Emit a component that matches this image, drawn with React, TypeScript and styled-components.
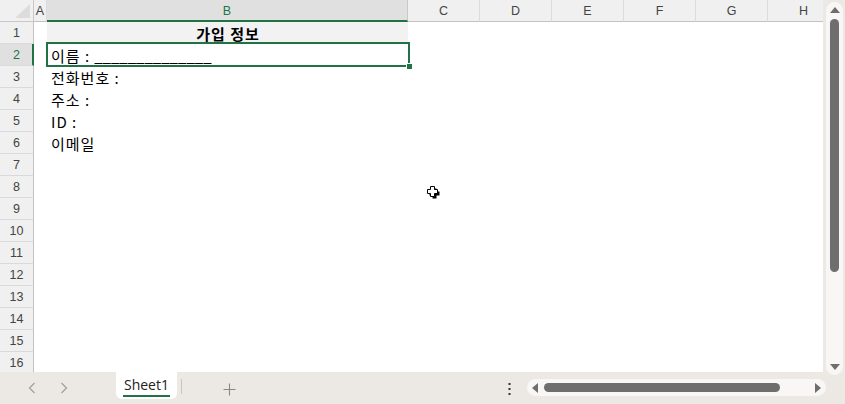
import styled, { createGlobalStyle } from 'styled-components'

const GREEN = '#217346'
const UI_FONT = `'Liberation Sans', 'Noto Sans', Arial, sans-serif`
const CELL_FONT = `'Noto Sans CJK KR', 'Noto Sans', sans-serif`

const GlobalStyle = createGlobalStyle`
  html, body {
    margin: 0;
    padding: 0;
    overflow: hidden;
    background: #ece9e5;
  }
`

const Window = styled.div`
  width: 845px;
  height: 404px;
  display: flex;
  flex-direction: column;
  background: #ece9e5;
  overflow: hidden;
  position: relative;
`

const Main = styled.div`
  display: flex;
  height: 372px;
`

const Sheet = styled.div`
  position: relative;
  width: 823px;
  height: 372px;
  overflow: hidden;
  background: #fff;
  display: grid;
  grid-template-columns: 34px 13px 361px repeat(6, 72px);
  grid-template-rows: repeat(17, 22px);
`

const Corner = styled.div`
  box-sizing: border-box;
  background: #f0f0f0;
  border-right: 1px solid #c8c8c8;
  border-bottom: 1px solid #c8c8c8;
  display: flex;
  align-items: flex-end;
  justify-content: flex-end;
  padding: 0 3px 3px 0;
`

const ColHead = styled.div<{ active?: boolean }>`
  box-sizing: border-box;
  background: ${(p) => (p.active ? '#e0e0e0' : '#f0f0f0')};
  border-right: 1px solid ${(p) => (p.active ? '#c8c8c8' : '#dcdcdc')};
  border-bottom: ${(p) => (p.active ? `2px solid ${GREEN}` : '1px solid #c2c2c2')};
  color: ${(p) => (p.active ? GREEN : '#444')};
  font: 12.5px ${UI_FONT};
  display: flex;
  align-items: center;
  justify-content: center;
  padding-top: ${(p) => (p.active ? '1px' : '0')};
`

const RowHead = styled.div<{ active?: boolean }>`
  box-sizing: border-box;
  background: ${(p) => (p.active ? '#e0e0e0' : '#f0f0f0')};
  border-bottom: 1px solid #dadada;
  border-right: ${(p) => (p.active ? `2px solid ${GREEN}` : '1px solid #c2c2c2')};
  color: ${(p) => (p.active ? GREEN : '#444')};
  font: 12.5px ${UI_FONT};
  display: flex;
  align-items: center;
  justify-content: center;
  padding-left: ${(p) => (p.active ? '1px' : '0')};
`

const Cell = styled.div<{ filled?: boolean; bold?: boolean; center?: boolean; span?: number }>`
  position: relative;
  grid-column: ${(p) => (p.span ? `span ${p.span}` : 'auto')};
  background: ${(p) => (p.filled ? '#f2f2f2' : '#fff')};
  font: ${(p) => (p.bold ? 700 : 400)} 15px ${CELL_FONT};
  letter-spacing: 1px;
  color: #000;
  white-space: pre;
  display: flex;
  align-items: center;
  justify-content: ${(p) => (p.center ? 'center' : 'flex-start')};
  padding-left: ${(p) => (p.center ? '1px' : '4px')};
  box-sizing: border-box;
`

// the blank line after a label, typed as underscores
const Blank = styled.span`
  letter-spacing: 0;
  margin-left: 4px;
`

const Selection = styled.div`
  position: absolute;
  left: -1px;
  top: -2px;
  right: -2px;
  bottom: -1px;
  border: 2px solid ${GREEN};
  pointer-events: none;
  z-index: 2;

  &::after {
    content: '';
    position: absolute;
    right: -4px;
    bottom: -4px;
    width: 5px;
    height: 5px;
    background: ${GREEN};
    border: 1px solid #fff;
    border-width: 1px 0 0 1px;
  }
`

const Pointer = styled.svg`
  position: absolute;
  left: 427px;
  top: 186px;
  z-index: 3;
`

const VScroll = styled.div`
  width: 22px;
  position: relative;
`

const VTrack = styled.div`
  position: absolute;
  left: 3px;
  top: 2px;
  width: 17px;
  height: 373px;
  border-radius: 9px;
  background: #f8f7f6;
  display: flex;
  flex-direction: column;
  align-items: center;
  padding: 4px 0;
  box-sizing: border-box;
  z-index: 1;
`

const VThumb = styled.div`
  width: 9px;
  height: 253px;
  margin-top: 5px;
  border-radius: 5px;
  background: #6e6e6e;
`

const Spacer = styled.div`
  flex: 1;
`

const BottomBar = styled.div`
  height: 32px;
  display: flex;
  align-items: flex-start;
  position: relative;
`

const NavArrows = styled.div`
  width: 116px;
  height: 32px;
  display: flex;
  align-items: center;
  gap: 24px;
  padding-left: 28px;
  box-sizing: border-box;
`

const Tab = styled.div`
  width: 61px;
  height: 27px;
  background: #fff;
  border-radius: 0 0 6px 6px;
  display: flex;
  flex-direction: column;
  align-items: center;
  justify-content: center;
  font: 14px 'Open Sans', ${UI_FONT};
  color: #222;
  padding-top: 1px;
  box-sizing: border-box;
`

const TabLabel = styled.span`
  line-height: 18px;
  border-bottom: 2px solid ${GREEN};
  padding: 0 1px 1px;
`

const Divider = styled.div`
  width: 1px;
  height: 15px;
  margin: 7px 0 0 4px;
  background: #c8c6c4;
`

const AddButton = styled.div`
  width: 94px;
  height: 32px;
  display: flex;
  align-items: center;
  justify-content: center;
  padding-top: 2px;
  box-sizing: border-box;
`

const MoreButton = styled.div`
  margin-left: 226px;
  width: 14px;
  height: 32px;
  display: flex;
  align-items: center;
  justify-content: center;
  padding-top: 2px;
  box-sizing: border-box;
`

const HTrack = styled.div`
  margin: 7px 0 0 11px;
  width: 299px;
  height: 17px;
  border-radius: 9px;
  background: #f8f7f6;
  display: flex;
  align-items: center;
  padding: 0 4px;
  box-sizing: border-box;
`

const HThumb = styled.div`
  width: 236px;
  height: 9px;
  margin-left: 5px;
  border-radius: 5px;
  background: #6e6e6e;
`

const Chevron = ({ dir }: { dir: 'left' | 'right' }) => (
  <svg width="8" height="12" viewBox="0 0 8 12">
    <path
      d={dir === 'left' ? 'M6.5 1 L1.5 6 L6.5 11' : 'M1.5 1 L6.5 6 L1.5 11'}
      fill="none"
      stroke="#a19f9d"
      strokeWidth="1.2"
    />
  </svg>
)

const Triangle = ({ dir }: { dir: 'up' | 'down' | 'left' | 'right' }) => {
  const pts = {
    up: '0,7 5,1 10,7',
    down: '0,1 10,1 5,7',
    left: '7,0 7,10 1,5',
    right: '1,0 1,10 7,5',
  }[dir]
  const vertical = dir === 'up' || dir === 'down'
  return (
    <svg width={vertical ? 10 : 8} height={vertical ? 8 : 10} viewBox={vertical ? '0 0 10 8' : '0 0 8 10'}>
      <polygon points={pts} fill="#6e6e6e" />
    </svg>
  )
}

const columns = ['A', 'B', 'C', 'D', 'E', 'F', 'G', 'H']

const labels: Record<number, string> = {
  3: '전화번호 :',
  4: '주소 :',
  5: 'ID :',
  6: '이메일',
}

function App() {
  const bodyRows = Array.from({ length: 16 }, (_, i) => i + 1)

  return (
    <Window>
      <GlobalStyle />
      <Main>
        <Sheet>
          <Corner>
            <svg width="15" height="14" viewBox="0 0 15 14">
              <polygon points="15,0 15,14 0,14" fill="#dcdcdc" />
            </svg>
          </Corner>
          {columns.map((c) => (
            <ColHead key={c} active={c === 'B'}>
              {c}
            </ColHead>
          ))}

          {bodyRows.map((r) => (
            <Row key={r} row={r} />
          ))}

          <Pointer width="13" height="13" viewBox="0 0 13 13">
            <path d="M4.5 1.5h4v3h3v4h-3v3h-4v-3h-3v-4h3z" fill="#000" transform="translate(1 1)" />
            <path d="M3.5 0.5h4v3h3v4h-3v3h-4v-3h-3v-4h3z" fill="#fff" stroke="#000" strokeWidth="1" />
          </Pointer>
        </Sheet>
        <VScroll>
          <VTrack>
            <Triangle dir="up" />
            <VThumb />
            <Spacer />
            <Triangle dir="down" />
          </VTrack>
        </VScroll>
      </Main>

      <BottomBar>
        <NavArrows>
          <Chevron dir="left" />
          <Chevron dir="right" />
        </NavArrows>
        <Tab>
          <TabLabel>Sheet1</TabLabel>
        </Tab>
        <Divider />
        <AddButton>
          <svg width="13" height="13" viewBox="0 0 13 13">
            <path d="M6.5 0.5v12M0.5 6.5h12" stroke="#8a8886" strokeWidth="1.1" />
          </svg>
        </AddButton>
        <MoreButton>
          <svg width="3" height="12" viewBox="0 0 3 12">
            <rect x="0.5" y="0" width="2" height="2" fill="#333" />
            <rect x="0.5" y="5" width="2" height="2" fill="#333" />
            <rect x="0.5" y="10" width="2" height="2" fill="#333" />
          </svg>
        </MoreButton>
        <HTrack>
          <Triangle dir="left" />
          <HThumb />
          <Spacer />
          <Triangle dir="right" />
        </HTrack>
      </BottomBar>
    </Window>
  )
}

function Row({ row }: { row: number }) {
  return (
    <>
      <RowHead active={row === 2}>{row}</RowHead>
      <Cell />
      {row === 1 ? (
        <Cell filled bold center>
          가입 정보
        </Cell>
      ) : row === 2 ? (
        <Cell>
          이름 :<Blank>______________</Blank>
          <Selection />
        </Cell>
      ) : (
        <Cell>{labels[row]}</Cell>
      )}
      <Cell span={6} />
    </>
  )
}

export default App
